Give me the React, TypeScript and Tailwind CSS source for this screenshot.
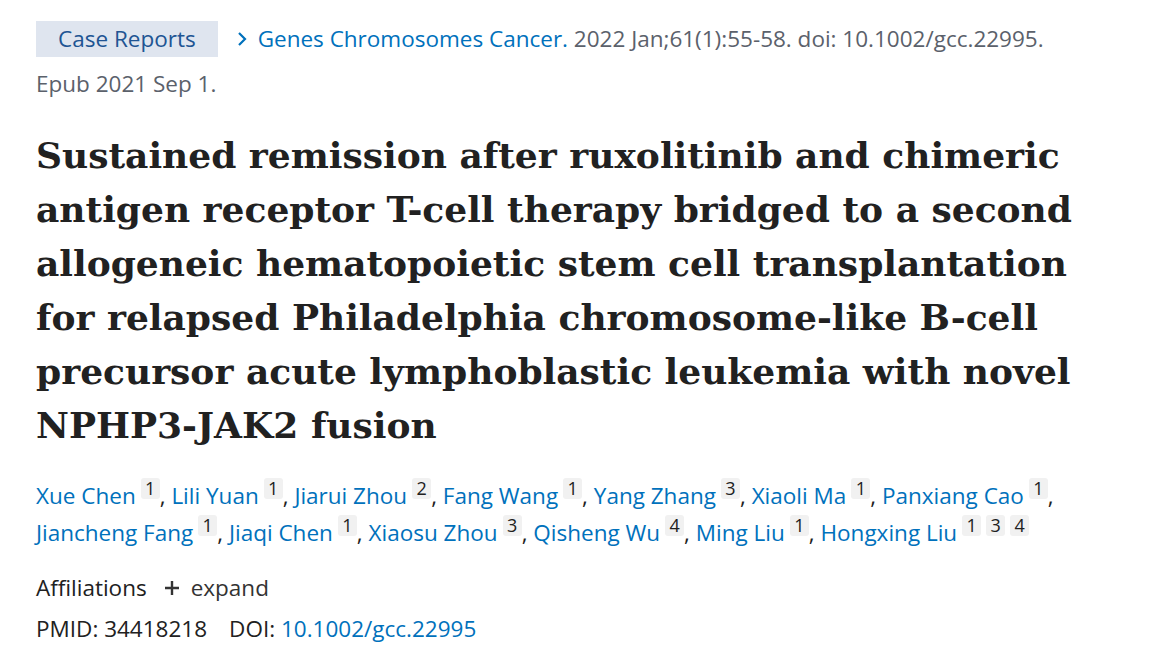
import React from "react";

const authors: { name: string; aff: number[] }[] = [
  { name: "Xue Chen", aff: [1] },
  { name: "Lili Yuan", aff: [1] },
  { name: "Jiarui Zhou", aff: [2] },
  { name: "Fang Wang", aff: [1] },
  { name: "Yang Zhang", aff: [3] },
  { name: "Xiaoli Ma", aff: [1] },
  { name: "Panxiang Cao", aff: [1] },
  { name: "Jiancheng Fang", aff: [1] },
  { name: "Jiaqi Chen", aff: [1] },
  { name: "Xiaosu Zhou", aff: [3] },
  { name: "Qisheng Wu", aff: [4] },
  { name: "Ming Liu", aff: [1] },
  { name: "Hongxing Liu", aff: [1, 3, 4] },
];

const titleLines = [
  "Sustained remission after ruxolitinib and chimeric",
  "antigen receptor T-cell therapy bridged to a second",
  "allogeneic hematopoietic stem cell transplantation",
  "for relapsed Philadelphia chromosome-like B-cell",
  "precursor acute lymphoblastic leukemia with novel",
  "NPHP3-JAK2 fusion",
];

function AuthorItem({ a, last }: { a: { name: string; aff: number[] }; last: boolean }) {
  return (
    <span className="whitespace-nowrap">
      <a className="text-[#0071bc]">{a.name}</a>
      {a.aff.map((n, i) => (
        <span
          key={i}
          className="relative -top-[9px] ml-[5px] inline-block min-w-[19px] rounded-[3px] bg-[#f1f1f1] px-[4px] text-center align-baseline text-[18px] leading-[21px] text-[#212121]"
        >
          {n}
        </span>
      ))}
      {!last && <span className="text-[#212121]">,</span>}
    </span>
  );
}

export default function App() {
  return (
    <div
      className="min-h-screen bg-white pl-[36px] pr-[40px] pt-[21px] text-[22.5px] text-[#212121]"
      style={{ fontFamily: '"Open Sans", "Noto Sans", sans-serif' }}
    >
      {/* Citation */}
      <div className="whitespace-nowrap leading-[36px]">
        <span className="inline-block bg-[#dfe5ef] px-[22px] text-[#205493]">Case Reports</span>
        <span className="ml-[16px] text-[#0071bc]">
          <svg className="mr-[8px] inline-block h-[16px] w-[16px] -translate-y-[2px]" viewBox="0 0 16 16" fill="none">
            <path d="M5 2l6 6-6 6" stroke="#0071bc" strokeWidth="2.2" />
          </svg>
          Genes Chromosomes Cancer.
        </span>
        <span className="text-[#5b616b]"> 2022 Jan;61(1):55-58. doi: 10.1002/gcc.22995.</span>
      </div>
      <div className="mt-[9px] leading-[36px] text-[#5b616b]">Epub 2021 Sep 1.</div>

      {/* Title */}
      <h1
        className="mt-[26px] text-[36px] font-bold leading-[54px] text-[#212121]"
        style={{ fontFamily: '"DejaVu Serif", serif' }}
      >
        {titleLines.map((l, i) => (
          <div key={i} className="whitespace-nowrap">{l}</div>
        ))}
      </h1>

      {/* Authors */}
      <div className="mt-[25px] leading-[37px]">
        {authors.map((a, i) => (
          <React.Fragment key={a.name}>
            <AuthorItem a={a} last={i === authors.length - 1} />
            {i < authors.length - 1 && i !== 6 && " "}
            {i === 6 && <br />}
          </React.Fragment>
        ))}
      </div>

      {/* Affiliations */}
      <div className="mt-[19px] flex items-center leading-[36px]">
        <span>Affiliations</span>
        <span className="ml-[17px] flex items-center text-[#333]">
          <svg className="mr-[11px] h-[16px] w-[16px]" viewBox="0 0 16 16">
            <path d="M8 1v14M1 8h14" stroke="#333" strokeWidth="2.4" />
          </svg>
          expand
        </span>
      </div>
      <div className="mt-[5px] leading-[36px]">
        PMID: 34418218
        <span className="ml-[22px]">DOI: </span>
        <a className="text-[#0071bc]">10.1002/gcc.22995</a>
      </div>
    </div>
  );
}
